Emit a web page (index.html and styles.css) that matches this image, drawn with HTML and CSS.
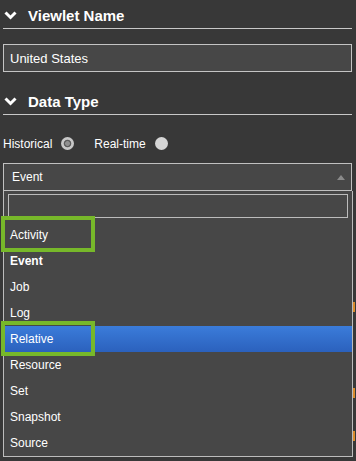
FILE: index.html
```html
<!DOCTYPE html>
<html>
<head>
    <link rel="stylesheet" href="styles.css">
</head>
<body>
<div class="panel">
    <div class="section-head">
        <svg class="chevron" width="13" height="9" viewBox="0 0 13 9">
            <path d="M1.5 1.5 L6.5 6.5 L11.5 1.5" fill="none" stroke="#ffffff" stroke-width="3"/>
        </svg>
        <span>Viewlet Name</span>
    </div>

    <div class="text-field">United States</div>

    <div class="section-head">
        <svg class="chevron" width="13" height="9" viewBox="0 0 13 9">
            <path d="M1.5 1.5 L6.5 6.5 L11.5 1.5" fill="none" stroke="#ffffff" stroke-width="3"/>
        </svg>
        <span>Data Type</span>
    </div>

    <div class="radio-row">
        <span class="radio-label">Historical</span>
        <span class="radio checked"></span>
        <span class="radio-label">Real-time</span>
        <span class="radio"></span>
    </div>

    <div class="select">
        <div class="select-head">
            <span>Event</span>
            <span class="select-arrow"></span>
        </div>
        <div class="select-drop">
            <div class="select-search"></div>
            <ul class="options">
                <li class="option callout">Activity</li>
                <li class="option selected">Event</li>
                <li class="option">Job</li>
                <li class="option">Log</li>
                <li class="option highlighted callout">Relative</li>
                <li class="option">Resource</li>
                <li class="option">Set</li>
                <li class="option">Snapshot</li>
                <li class="option">Source</li>
            </ul>
            <span class="peek peek-1"></span>
            <span class="peek peek-2"></span>
            <span class="peek peek-3"></span>
        </div>
    </div>
</div>
</body>
</html>
```

FILE: styles.css
```css
html, body {
    margin: 0;
    background-color: #383838;
    color: #ffffff;
    font-family: "Liberation Sans", Arial, sans-serif;
}

.panel {
    width: 349px;
    padding-left: 3px;
}

.section-head {
    display: flex;
    align-items: center;
    height: 26px;
    padding-top: 2px;
    padding-left: 1px;
    border-bottom: 1px solid #c8c8c8;
    font-size: 15px;
    font-weight: bold;
}

.section-head + .text-field {
    margin-top: 15px;
}

.text-field + .section-head {
    margin-top: 14px;
}

.chevron {
    margin-right: 11px;
}

.text-field {
    box-sizing: border-box;
    height: 28px;
    display: flex;
    align-items: center;
    padding-left: 6px;
    background-color: #474747;
    border: 1px solid #c4c4c4;
    font-size: 13px;
}

.radio-row {
    display: flex;
    align-items: center;
    height: 23px;
    margin-top: 17px;
    font-size: 12px;
}

.radio-label {
    margin-right: 9px;
}

.radio {
    width: 13px;
    height: 13px;
    border-radius: 50%;
    background-color: #d6d6d6;
    margin-right: 20px;
}

.radio.checked {
    background: radial-gradient(circle, #909090 0, #909090 2px, #5c5c5c 2.8px, #5c5c5c 3.4px, #c8c8c8 4.2px);
}

.select {
    margin-top: 8px;
}

.select-head {
    box-sizing: border-box;
    height: 28px;
    display: flex;
    align-items: center;
    padding: 0 6px 0 8px;
    background-color: #474747;
    border: 1px solid #c0c0c0;
    font-size: 12px;
}

.select-arrow {
    margin-left: auto;
    width: 0;
    height: 0;
    border-left: 4px solid transparent;
    border-right: 4px solid transparent;
    border-bottom: 5px solid #8a8a8a;
}

.select-drop {
    position: relative;
    width: 340px;
    padding: 3px 4px 0;
    background-color: #474747;
    border: 1px solid #bcbcbc;
    border-top: none;
}

.select-search {
    box-sizing: border-box;
    height: 24px;
    border: 1px solid #bcbcbc;
}

.options {
    list-style: none;
    margin: 4px -4px 0;
    padding: 0;
}

.option {
    position: relative;
    height: 26px;
    line-height: 26px;
    padding-left: 6px;
    font-size: 12px;
}

.option.selected {
    font-weight: bold;
}

.option.highlighted {
    background: linear-gradient(#3b7cda, #2b61bd);
}

.option.callout::after {
    content: "";
    position: absolute;
    left: -3px;
    top: -6px;
    box-sizing: border-box;
    width: 94px;
    height: 36px;
    border: 4px solid #77b82a;
}

.option.highlighted.callout::after {
    top: -5px;
    height: 35px;
}

.peek {
    position: absolute;
    right: -3px;
    width: 2px;
    height: 10px;
    background-color: #d98c2e;
}

.peek-1 {
    top: 111px;
}

.peek-2 {
    top: 197px;
}

.peek-3 {
    top: 240px;
}
```
